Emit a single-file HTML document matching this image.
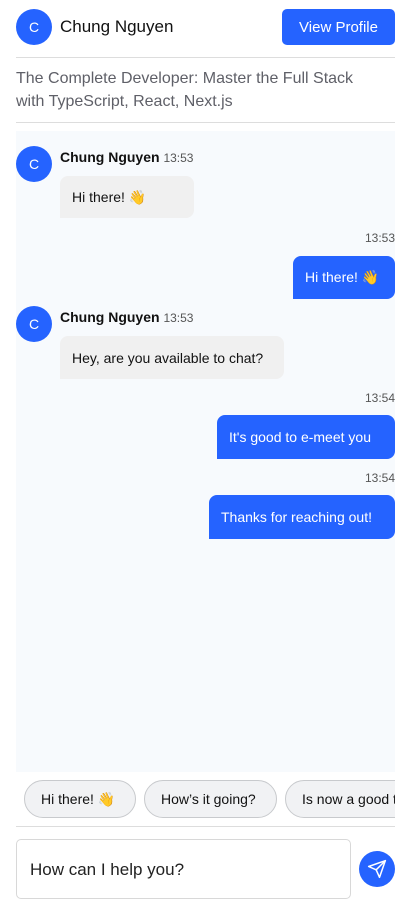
<!DOCTYPE html>
<html><head><meta charset="utf-8"><style>
*{margin:0;padding:0;box-sizing:border-box}
body{width:410px;height:914px;background:#fff;font-family:"Liberation Sans",sans-serif;position:relative;overflow:hidden;color:#111}
.a{position:absolute}
.av{position:absolute;width:36px;height:36px;border-radius:50%;background:#2563ff;color:#fff;font-size:14px;display:flex;align-items:center;justify-content:center}
.b{position:absolute;font-size:14px;display:flex;align-items:center;padding-left:12px;white-space:nowrap;border-radius:8px 8px 8px 0}
.r{background:#f0f0f0;color:#111}
.s{background:#2563ff;color:#fff}
.t{position:absolute;font-size:12px;color:#555}
.n{position:absolute;font-size:14px;font-weight:bold;color:#111}
.chip{position:absolute;top:780px;height:38px;border:1px solid #c8cacd;border-radius:19px;background:#f1f2f4;font-size:14px;display:flex;align-items:center;padding-left:16px;white-space:nowrap;overflow:hidden}
</style></head><body>
<div class="av" style="left:16px;top:9px">C</div>
<div class="a" style="left:60px;top:17px;font-size:17px">Chung Nguyen</div>
<div class="a" style="left:282px;top:9px;width:113px;height:36px;background:#2563ff;border-radius:5px;color:#fff;font-size:15px;display:flex;align-items:center;justify-content:center">View Profile</div>
<div class="a" style="left:16px;top:57px;width:379px;height:1px;background:#ddd"></div>
<div class="a" style="left:16px;top:67px;width:362px;font-size:16px;line-height:23px;color:#5f6068">The Complete Developer: Master the Full Stack with TypeScript, React, Next.js</div>
<div class="a" style="left:16px;top:122px;width:379px;height:1px;background:#ddd"></div>
<div class="a" style="left:16px;top:131px;width:379px;height:641px;background:#f7fafd"></div>

<div class="av" style="left:16px;top:146px">C</div>
<div class="n" style="left:60px;top:149px">Chung Nguyen <span style="font-weight:normal;font-size:12px;color:#555">13:53</span></div>
<div class="b r" style="left:60px;top:176px;width:134px;height:42px">Hi there! 👋</div>
<div class="t" style="right:15px;top:231px">13:53</div>
<div class="b s" style="left:293px;top:256px;width:102px;height:43px">Hi there! 👋</div>

<div class="av" style="left:16px;top:306px">C</div>
<div class="n" style="left:60px;top:309px">Chung Nguyen <span style="font-weight:normal;font-size:12px;color:#555">13:53</span></div>
<div class="b r" style="left:60px;top:336px;width:224px;height:43px">Hey, are you available to chat?</div>
<div class="t" style="right:15px;top:391px">13:54</div>
<div class="b s" style="left:217px;top:415px;width:178px;height:44px">It's good to e-meet you</div>
<div class="t" style="right:15px;top:471px">13:54</div>
<div class="b s" style="left:209px;top:495px;width:186px;height:44px">Thanks for reaching out!</div>

<div class="chip" style="left:24px;width:112px">Hi there! 👋</div>
<div class="chip" style="left:144px;width:133px">How’s it going?</div>
<div class="a" style="left:285px;top:780px;width:110px;height:38px;overflow:hidden"><div class="chip" style="left:0;top:0;width:160px">Is now a good time?</div></div>
<div class="a" style="left:16px;top:826px;width:379px;height:1px;background:#ddd"></div>
<div class="a" style="left:16px;top:839px;width:335px;height:60px;border:1px solid #d8d8d8;border-radius:5px;font-size:17px;padding:20px 0 0 13px;color:#222">How can I help you?</div>
<div class="a" style="left:359px;top:851px;width:36px;height:36px;border-radius:50%;background:#2563ff;display:flex;align-items:center;justify-content:center">
<svg width="20" height="20" viewBox="0 0 24 24" fill="none" stroke="#fff" stroke-width="1.8" stroke-linecap="round" stroke-linejoin="round"><path d="M22 2L11 13"/><path d="M22 2l-7 20-4-9-9-4z"/></svg></div>
</body></html>
